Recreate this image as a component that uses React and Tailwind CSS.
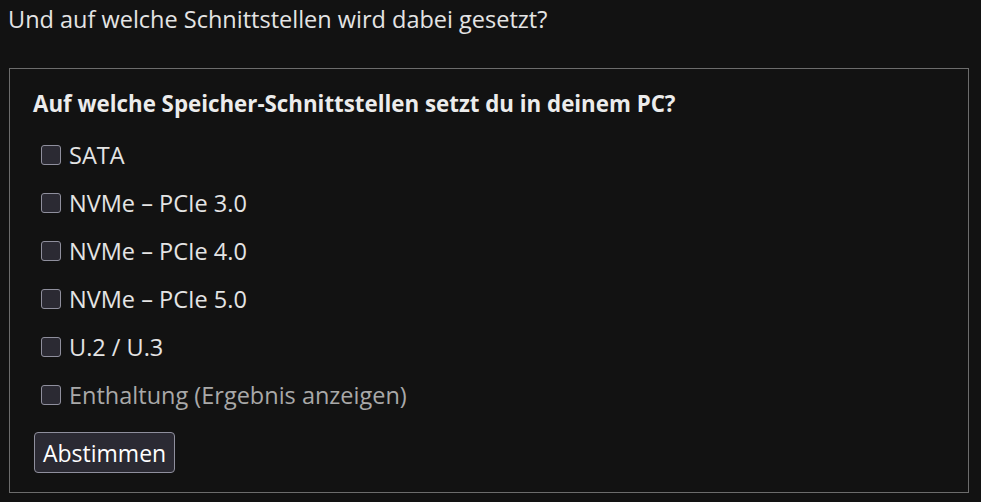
const options = [
  { label: 'SATA' },
  { label: 'NVMe – PCIe 3.0' },
  { label: 'NVMe – PCIe 4.0' },
  { label: 'NVMe – PCIe 5.0' },
  { label: 'U.2 / U.3' },
  { label: 'Enthaltung (Ergebnis anzeigen)', muted: true },
];

const App = () => {
  return (
    <div className="min-h-screen w-full bg-[#121212] text-[#e4e4e4] font-['Open_Sans',sans-serif] overflow-hidden">
      <p className="pl-[8px] pt-[4px] h-[68px] text-[23.5px] leading-[30px]">Und auf welche Schnittstellen wird dabei gesetzt?</p>

      <div className="ml-[9px] mr-[12px] h-[425px] border border-[#6c6c6c] pl-[23px] pt-[21px]">
        <h3 className="text-[22.3px] font-bold leading-[28px] text-[#ececec]">
          Auf welche Speicher-Schnittstellen setzt du in deinem PC?
        </h3>

        <div className="mt-[13px] flex flex-col">
          {options.map((opt) => (
            <label key={opt.label} className="h-[48px] flex items-center pl-[8px]">
              <span className="w-[20px] h-[20px] rounded-[3px] border border-[#8f8f9d] bg-[#2b2a33] shrink-0"></span>
              <span className={`ml-[8px] text-[23.5px] leading-[28px] ${opt.muted ? 'text-[#a9a9a9]' : 'text-[#e4e4e4]'}`}>
                {opt.label}
              </span>
            </label>
          ))}
        </div>

        <button className="mt-[13px] ml-[1px] h-[41px] px-[8px] rounded-[4px] border border-[#8f8f9d] bg-[#2b2a33] text-[23px] leading-[28px] text-white">
          Abstimmen
        </button>
      </div>
    </div>
  );
};

export default App;
